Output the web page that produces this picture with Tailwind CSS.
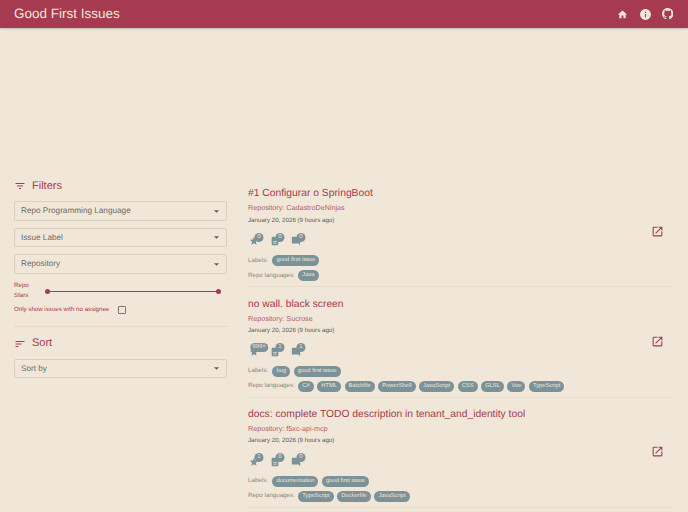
<!DOCTYPE html>
<html lang="en">
<head>
    <meta charset="UTF-8">
    <title>Good First Issues</title>
    <script src="https://cdn.jsdelivr.net/npm/@tailwindcss/browser@4"></script>
</head>
<body class="bg-[#f0e7d8] font-['Liberation_Sans',sans-serif] h-[512px] overflow-hidden [text-rendering:geometricPrecision] antialiased">

    <!-- app bar -->
    <header class="h-[28px] bg-[#a63a50] flex items-center justify-between pl-[14px] pr-[15px] shadow-[0_1px_2px_rgba(0,0,0,0.2)]">
        <h1 class="text-[13.5px] text-[#f0e7d8]">Good First Issues</h1>
        <div class="flex items-center text-[#f0e7d8]">
            <svg class="w-[11px] h-[11px] mr-[11px]" viewBox="0 0 24 24" fill="currentColor"><path d="M10 20v-6h4v6h5v-8h3L12 3 2 12h3v8z"/></svg>
            <svg class="w-[13px] h-[13px] mr-[10px]" viewBox="0 0 24 24" fill="currentColor"><path d="M12 2C6.48 2 2 6.48 2 12s4.48 10 10 10 10-4.48 10-10S17.52 2 12 2zm1 15h-2v-6h2v6zm0-8h-2V7h2v2z"/></svg>
            <svg class="w-[11.5px] h-[11.5px]" viewBox="0 0 16 16" fill="currentColor"><path d="M8 0C3.58 0 0 3.58 0 8c0 3.54 2.29 6.53 5.47 7.59.4.07.55-.17.55-.38 0-.19-.01-.82-.01-1.49-2.01.37-2.53-.49-2.69-.94-.09-.23-.48-.94-.82-1.13-.28-.15-.68-.52-.01-.53.63-.01 1.08.58 1.23.82.72 1.21 1.87.87 2.33.66.07-.52.28-.87.51-1.07-1.78-.2-3.64-.89-3.64-3.95 0-.87.31-1.59.82-2.15-.08-.2-.36-1.02.08-2.12 0 0 .67-.21 2.2.82.64-.18 1.32-.27 2-.27s1.36.09 2 .27c1.53-1.04 2.2-.82 2.2-.82.44 1.1.16 1.92.08 2.12.51.56.82 1.27.82 2.15 0 3.07-1.87 3.75-3.65 3.95.29.25.54.73.54 1.48 0 1.07-.01 1.93-.01 2.2 0 .21.15.46.55.38A8.01 8.01 0 0 0 16 8c0-4.42-3.58-8-8-8z"/></svg>
        </div>
    </header>

    <main class="flex pt-[148px] pl-[14px] pr-[16px]">
        <!-- filters -->
        <aside class="w-[213px] shrink-0 text-[#a63a50]">
            <div class="flex items-center h-[18px] mt-[1px] mb-[6px]">
                <svg class="w-[12px] h-[12px]" viewBox="0 0 24 24" fill="currentColor"><path d="M10 18h4v-2h-4v2zM3 6v2h18V6H3zm3 7h12v-2H6v2z"/></svg>
                <span class="ml-[6px] text-[11px]">Filters</span>
            </div>
            <div class="flex flex-col gap-[7px]">
                <div class="h-[19.5px] pt-[1px] border border-[#d9d0c1] rounded-[2px] flex items-center justify-between pl-[6px] pr-[7px] text-[8.2px] text-[#6f6a63]">Repo Programming Language<svg class="w-[5px] h-[3px]" viewBox="0 0 10 5" fill="#5f5a54"><path d="M0 0l5 5 5-5z"/></svg></div>
                <div class="h-[19.5px] pt-[1px] border border-[#d9d0c1] rounded-[2px] flex items-center justify-between pl-[6px] pr-[7px] text-[8.2px] text-[#6f6a63]">Issue Label<svg class="w-[5px] h-[3px]" viewBox="0 0 10 5" fill="#5f5a54"><path d="M0 0l5 5 5-5z"/></svg></div>
                <div class="h-[19.5px] pt-[1px] border border-[#d9d0c1] rounded-[2px] flex items-center justify-between pl-[6px] pr-[7px] text-[8.2px] text-[#6f6a63]">Repository<svg class="w-[5px] h-[3px]" viewBox="0 0 10 5" fill="#5f5a54"><path d="M0 0l5 5 5-5z"/></svg></div>
            </div>
            <div class="flex items-center mt-[7px]">
                <div class="w-[31px] text-[6.2px] leading-[10.5px]">Repo<br>Stars</div>
                <div class="relative h-[1px] w-[171px] ml-[2px] bg-[#a63a50]">
                    <span class="absolute left-[-2.5px] top-[-2px] w-[5px] h-[5px] rounded-full bg-[#a63a50]"></span>
                    <span class="absolute right-[-2.5px] top-[-2px] w-[5px] h-[5px] rounded-full bg-[#a63a50]"></span>
                </div>
            </div>
            <div class="flex items-center mt-[3px] text-[6.15px] h-[10px]">
                Only show issues with no assignee
                <span class="ml-[9px] w-[8px] h-[8px] border border-[#7c7770] rounded-[1px]"></span>
            </div>
            <div class="border-t border-[#e0d7c8] mt-[11px] pt-[8px]">
                <div class="flex items-center h-[18px] mb-[6px]">
                    <svg class="w-[12px] h-[12px]" viewBox="0 0 24 24" fill="currentColor"><path d="M3 18h6v-2H3v2zM3 6v2h18V6H3zm0 7h12v-2H3v2z"/></svg>
                    <span class="ml-[6px] text-[11px]">Sort</span>
                </div>
                <div class="h-[19.5px] pt-[1px] border border-[#d9d0c1] rounded-[2px] flex items-center justify-between pl-[6px] pr-[7px] text-[8.2px] text-[#6f6a63]">Sort by<svg class="w-[5px] h-[3px]" viewBox="0 0 10 5" fill="#5f5a54"><path d="M0 0l5 5 5-5z"/></svg></div>
            </div>
        </aside>

        <!-- issue list -->
        <section class="ml-[21px] flex-1 text-[#a63a50]">

            <article class="h-[111px] pt-[11px] border-b border-[#e6ddce] flex items-start justify-between">
                <div>
                    <h2 class="text-[10.3px] leading-[14px]">#1 Configurar o SpringBoot</h2>
                    <p class="text-[7.2px] leading-[10px] mt-[2px] opacity-80">Repository: CadastroDeNinjas</p>
                    <p class="text-[6.2px] leading-[9px] mt-[2.5px] text-[#5f5a54]">January 20, 2026 (9 hours ago)</p>
                    <div class="flex gap-[7px] mt-[3.5px] h-[18px] items-end">
                        <div class="relative w-[14px] h-[14px]"><svg class="w-[10px] h-[10px] absolute left-[1px] bottom-0" viewBox="0 0 24 24" fill="#7c9299"><path d="M12 17.27L18.18 21l-1.64-7.03L22 9.24l-7.19-.61L12 2 9.19 8.63 2 9.24l5.46 4.73L5.82 21z"/></svg><span class="absolute left-[11px] top-[0.5px] -translate-x-1/2 min-w-[9px] px-[2px] h-[9px] rounded-full bg-[#7c9299] text-[6px] leading-[9px] text-center text-[#f0e7d8]">0</span></div>
                        <div class="relative w-[14px] h-[14px]"><svg class="w-[10px] h-[10px] absolute left-[1px] bottom-0" viewBox="0 0 24 24" fill="#7c9299"><path d="M14 2H6a2 2 0 0 0-2 2v16a2 2 0 0 0 2 2h12a2 2 0 0 0 2-2V8l-6-6zm2 16H8v-2h8v2zm0-4H8v-2h8v2z"/></svg><span class="absolute left-[11px] top-[0.5px] -translate-x-1/2 min-w-[9px] px-[2px] h-[9px] rounded-full bg-[#7c9299] text-[6px] leading-[9px] text-center text-[#f0e7d8]">0</span></div>
                        <div class="relative w-[14px] h-[14px]"><svg class="w-[10px] h-[10px] absolute left-[1px] bottom-0" viewBox="0 0 24 24" fill="#7c9299"><path d="M20 2H4a2 2 0 0 0-2 2v12a2 2 0 0 0 2 2h14l4 4V4a2 2 0 0 0-2-2z"/></svg><span class="absolute left-[11px] top-[0.5px] -translate-x-1/2 min-w-[9px] px-[2px] h-[9px] rounded-full bg-[#7c9299] text-[6px] leading-[9px] text-center text-[#f0e7d8]">0</span></div>
                    </div>
                    <div class="flex items-center gap-[3.5px] mt-[9px] h-[11px] text-[6.2px] text-[#8b8680]">
                        <span class="mr-[1px]">Labels:</span>
                        <span class="h-[11px] px-[4px] rounded-full bg-[#7c9299] text-[5.8px] text-[#f0e7d8] leading-[11.5px]">good first issue</span>
                    </div>
                    <div class="flex items-center gap-[3.5px] mt-[4px] h-[11px] text-[6.2px] text-[#8b8680]">
                        <span>Repo languages:</span>
                        <span class="h-[11px] px-[4px] rounded-full bg-[#7c9299] text-[5.8px] text-[#f0e7d8] leading-[11.5px]">Java</span>
                    </div>
                </div>
                <svg class="w-[13px] h-[13px] mr-[8px] mb-[11px] self-center" viewBox="0 0 24 24" fill="currentColor"><path d="M19 19H5V5h7V3H5a2 2 0 0 0-2 2v14a2 2 0 0 0 2 2h14c1.1 0 2-.9 2-2v-7h-2v7zM14 3v2h3.59l-9.83 9.83 1.41 1.41L19 6.41V10h2V3h-7z"/></svg>
            </article>

            <article class="h-[111px] pt-[10.5px] border-b border-[#e6ddce] flex items-start justify-between">
                <div>
                    <h2 class="text-[10.3px] leading-[14px]">no wall. black screen</h2>
                    <p class="text-[7.2px] leading-[10px] mt-[2px] opacity-80">Repository: Sucrose</p>
                    <p class="text-[6.2px] leading-[9px] mt-[2.5px] text-[#5f5a54]">January 20, 2026 (9 hours ago)</p>
                    <div class="flex gap-[7px] mt-[3.5px] h-[18px] items-end">
                        <div class="relative w-[14px] h-[14px]"><svg class="w-[10px] h-[10px] absolute left-[1px] bottom-0" viewBox="0 0 24 24" fill="#7c9299"><path d="M12 17.27L18.18 21l-1.64-7.03L22 9.24l-7.19-.61L12 2 9.19 8.63 2 9.24l5.46 4.73L5.82 21z"/></svg><span class="absolute left-[11px] top-[0.5px] -translate-x-1/2 min-w-[9px] px-[2px] h-[9px] rounded-full bg-[#7c9299] text-[6px] leading-[9px] text-center text-[#f0e7d8]">999+</span></div>
                        <div class="relative w-[14px] h-[14px]"><svg class="w-[10px] h-[10px] absolute left-[1px] bottom-0" viewBox="0 0 24 24" fill="#7c9299"><path d="M14 2H6a2 2 0 0 0-2 2v16a2 2 0 0 0 2 2h12a2 2 0 0 0 2-2V8l-6-6zm2 16H8v-2h8v2zm0-4H8v-2h8v2z"/></svg><span class="absolute left-[11px] top-[0.5px] -translate-x-1/2 min-w-[9px] px-[2px] h-[9px] rounded-full bg-[#7c9299] text-[6px] leading-[9px] text-center text-[#f0e7d8]">1</span></div>
                        <div class="relative w-[14px] h-[14px]"><svg class="w-[10px] h-[10px] absolute left-[1px] bottom-0" viewBox="0 0 24 24" fill="#7c9299"><path d="M20 2H4a2 2 0 0 0-2 2v12a2 2 0 0 0 2 2h14l4 4V4a2 2 0 0 0-2-2z"/></svg><span class="absolute left-[11px] top-[0.5px] -translate-x-1/2 min-w-[9px] px-[2px] h-[9px] rounded-full bg-[#7c9299] text-[6px] leading-[9px] text-center text-[#f0e7d8]">1</span></div>
                    </div>
                    <div class="flex items-center gap-[3.5px] mt-[9px] h-[11px] text-[6.2px] text-[#8b8680]">
                        <span class="mr-[1px]">Labels:</span>
                        <span class="h-[11px] px-[4px] rounded-full bg-[#7c9299] text-[5.8px] text-[#f0e7d8] leading-[11.5px]">bug</span>
                        <span class="h-[11px] px-[4px] rounded-full bg-[#7c9299] text-[5.8px] text-[#f0e7d8] leading-[11.5px]">good first issue</span>
                    </div>
                    <div class="flex items-center gap-[3.5px] mt-[4px] h-[11px] text-[6.2px] text-[#8b8680]">
                        <span>Repo languages:</span>
                        <span class="h-[11px] px-[4px] rounded-full bg-[#7c9299] text-[5.8px] text-[#f0e7d8] leading-[11.5px]">C#</span>
                        <span class="h-[11px] px-[4px] rounded-full bg-[#7c9299] text-[5.8px] text-[#f0e7d8] leading-[11.5px]">HTML</span>
                        <span class="h-[11px] px-[4px] rounded-full bg-[#7c9299] text-[5.8px] text-[#f0e7d8] leading-[11.5px]">Batchfile</span>
                        <span class="h-[11px] px-[4px] rounded-full bg-[#7c9299] text-[5.8px] text-[#f0e7d8] leading-[11.5px]">PowerShell</span>
                        <span class="h-[11px] px-[4px] rounded-full bg-[#7c9299] text-[5.8px] text-[#f0e7d8] leading-[11.5px]">JavaScript</span>
                        <span class="h-[11px] px-[4px] rounded-full bg-[#7c9299] text-[5.8px] text-[#f0e7d8] leading-[11.5px]">CSS</span>
                        <span class="h-[11px] px-[4px] rounded-full bg-[#7c9299] text-[5.8px] text-[#f0e7d8] leading-[11.5px]">GLSL</span>
                        <span class="h-[11px] px-[4px] rounded-full bg-[#7c9299] text-[5.8px] text-[#f0e7d8] leading-[11.5px]">Vue</span>
                        <span class="h-[11px] px-[4px] rounded-full bg-[#7c9299] text-[5.8px] text-[#f0e7d8] leading-[11.5px]">TypeScript</span>
                    </div>
                </div>
                <svg class="w-[13px] h-[13px] mr-[8px] mb-[11px] self-center" viewBox="0 0 24 24" fill="currentColor"><path d="M19 19H5V5h7V3H5a2 2 0 0 0-2 2v14a2 2 0 0 0 2 2h14c1.1 0 2-.9 2-2v-7h-2v7zM14 3v2h3.59l-9.83 9.83 1.41 1.41L19 6.41V10h2V3h-7z"/></svg>
            </article>

            <article class="h-[110px] pt-[9.5px] border-b border-[#e6ddce] flex items-start justify-between">
                <div>
                    <h2 class="text-[10.3px] leading-[14px]">docs: complete TODO description in tenant_and_identity tool</h2>
                    <p class="text-[7.2px] leading-[10px] mt-[2px] opacity-80">Repository: f5xc-api-mcp</p>
                    <p class="text-[6.2px] leading-[9px] mt-[2.5px] text-[#5f5a54]">January 20, 2026 (9 hours ago)</p>
                    <div class="flex gap-[7px] mt-[3.5px] h-[18px] items-end">
                        <div class="relative w-[14px] h-[14px]"><svg class="w-[10px] h-[10px] absolute left-[1px] bottom-0" viewBox="0 0 24 24" fill="#7c9299"><path d="M12 17.27L18.18 21l-1.64-7.03L22 9.24l-7.19-.61L12 2 9.19 8.63 2 9.24l5.46 4.73L5.82 21z"/></svg><span class="absolute left-[11px] top-[0.5px] -translate-x-1/2 min-w-[9px] px-[2px] h-[9px] rounded-full bg-[#7c9299] text-[6px] leading-[9px] text-center text-[#f0e7d8]">1</span></div>
                        <div class="relative w-[14px] h-[14px]"><svg class="w-[10px] h-[10px] absolute left-[1px] bottom-0" viewBox="0 0 24 24" fill="#7c9299"><path d="M14 2H6a2 2 0 0 0-2 2v16a2 2 0 0 0 2 2h12a2 2 0 0 0 2-2V8l-6-6zm2 16H8v-2h8v2zm0-4H8v-2h8v2z"/></svg><span class="absolute left-[11px] top-[0.5px] -translate-x-1/2 min-w-[9px] px-[2px] h-[9px] rounded-full bg-[#7c9299] text-[6px] leading-[9px] text-center text-[#f0e7d8]">0</span></div>
                        <div class="relative w-[14px] h-[14px]"><svg class="w-[10px] h-[10px] absolute left-[1px] bottom-0" viewBox="0 0 24 24" fill="#7c9299"><path d="M20 2H4a2 2 0 0 0-2 2v12a2 2 0 0 0 2 2h14l4 4V4a2 2 0 0 0-2-2z"/></svg><span class="absolute left-[11px] top-[0.5px] -translate-x-1/2 min-w-[9px] px-[2px] h-[9px] rounded-full bg-[#7c9299] text-[6px] leading-[9px] text-center text-[#f0e7d8]">0</span></div>
                    </div>
                    <div class="flex items-center gap-[3.5px] mt-[9px] h-[11px] text-[6.2px] text-[#8b8680]">
                        <span class="mr-[1px]">Labels:</span>
                        <span class="h-[11px] px-[4px] rounded-full bg-[#7c9299] text-[5.8px] text-[#f0e7d8] leading-[11.5px]">documentation</span>
                        <span class="h-[11px] px-[4px] rounded-full bg-[#7c9299] text-[5.8px] text-[#f0e7d8] leading-[11.5px]">good first issue</span>
                    </div>
                    <div class="flex items-center gap-[3.5px] mt-[4px] h-[11px] text-[6.2px] text-[#8b8680]">
                        <span>Repo languages:</span>
                        <span class="h-[11px] px-[4px] rounded-full bg-[#7c9299] text-[5.8px] text-[#f0e7d8] leading-[11.5px]">TypeScript</span>
                        <span class="h-[11px] px-[4px] rounded-full bg-[#7c9299] text-[5.8px] text-[#f0e7d8] leading-[11.5px]">Dockerfile</span>
                        <span class="h-[11px] px-[4px] rounded-full bg-[#7c9299] text-[5.8px] text-[#f0e7d8] leading-[11.5px]">JavaScript</span>
                    </div>
                </div>
                <svg class="w-[13px] h-[13px] mr-[8px] mb-[11px] self-center" viewBox="0 0 24 24" fill="currentColor"><path d="M19 19H5V5h7V3H5a2 2 0 0 0-2 2v14a2 2 0 0 0 2 2h14c1.1 0 2-.9 2-2v-7h-2v7zM14 3v2h3.59l-9.83 9.83 1.41 1.41L19 6.41V10h2V3h-7z"/></svg>
            </article>
        </section>
    </main>
</body>
</html>
